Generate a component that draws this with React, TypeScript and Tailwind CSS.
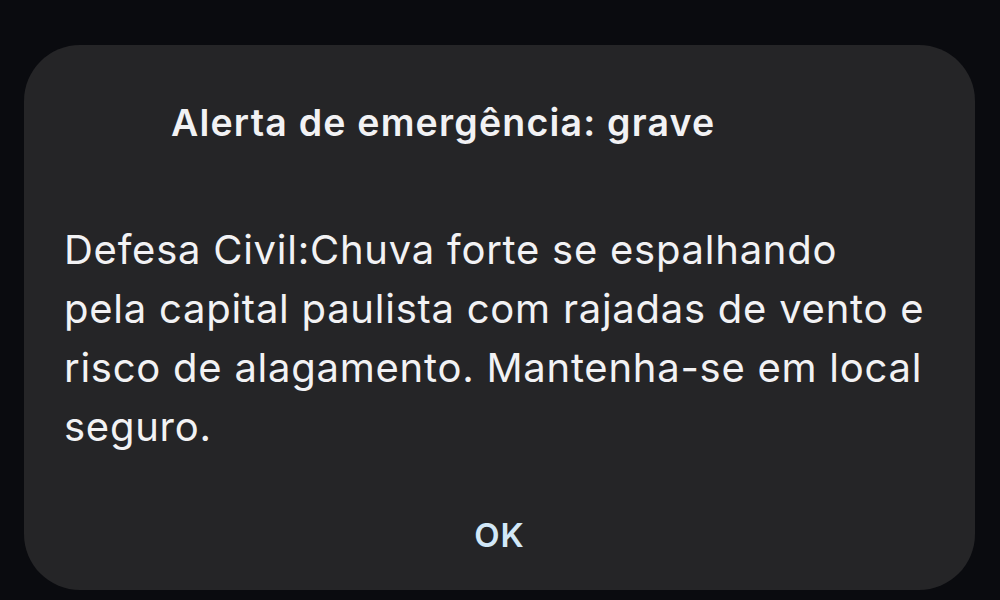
export default function App() {
  return (
    <div
      className="w-[1000px] h-[600px] bg-[#0a0b0f] pt-[45px] pl-[24px] overflow-hidden"
      style={{ fontFamily: 'Inter, "Noto Sans", sans-serif' }}
    >
      <div className="w-[951px] h-[545px] bg-[#252527] rounded-[56px] flex flex-col">
        <h1 className="pl-[147px] pt-[54px] text-[37.5px] font-semibold text-[#f2f2f4] leading-[48px] tracking-[1.2px]">
          Alerta de emergência: grave
        </h1>
        <p className="pl-[40px] pr-[20px] pt-[73px] text-[40px] leading-[59px] text-[#f2f2f4] tracking-[0.75px]">
          Defesa Civil:Chuva forte se espalhando
          <br />
          pela capital paulista com rajadas de vento e
          <br />
          risco de alagamento. Mantenha-se em local
          <br />
          seguro.
        </p>
        <div className="flex justify-center pt-[59px]">
          <button className="text-[33px] font-semibold text-[#d2e8f8] leading-[40px] tracking-[1px]">OK</button>
        </div>
      </div>
    </div>
  );
}
